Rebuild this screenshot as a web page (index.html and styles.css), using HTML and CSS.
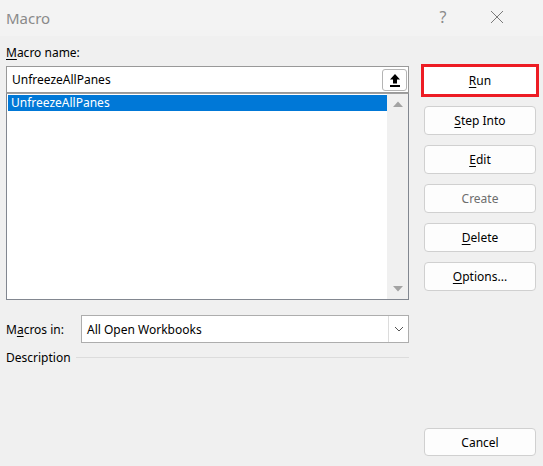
FILE: index.html
```html
<!DOCTYPE html>
<html lang="en">
<head>
<meta charset="utf-8">
<title>Macro</title>
<link rel="stylesheet" href="styles.css">
</head>
<body>
<div class="dialog">
  <div class="titlebar">
    <span class="title">Macro</span>
    <span class="help">?</span>
    <span class="close">
      <svg width="14" height="14" viewBox="0 0 14 14"><path d="M1 1 L13 13 M13 1 L1 13" stroke="#7a7a7a" stroke-width="1" fill="none"/></svg>
    </span>
  </div>
  <div class="body">
    <div class="left">
      <div class="label"><u>M</u>acro name:</div>
      <div class="name-input">
        <span class="name-text">UnfreezeAllPanes</span>
        <span class="pick-btn">
          <svg width="12" height="14" viewBox="0 0 12 14"><path d="M6 1 L11 6.5 L8 6.5 L8 10.5 L4 10.5 L4 6.5 L1 6.5 Z" fill="#000"/><rect x="1" y="12" width="10" height="2" fill="#000"/></svg>
        </span>
      </div>
      <div class="list">
        <div class="items">
          <div class="item selected">UnfreezeAllPanes</div>
        </div>
        <div class="scrollbar">
          <svg width="12" height="8" viewBox="0 0 12 8"><path d="M1 7 L6 1.5 L11 7 Z" fill="#a3a3a3"/></svg>
          <svg width="12" height="8" viewBox="0 0 12 8"><path d="M1 1 L6 6.5 L11 1 Z" fill="#a3a3a3"/></svg>
        </div>
      </div>
      <div class="macros-in">
        <span class="label-inline">M<u>a</u>cros in:</span>
        <div class="combo">
          <span class="combo-text">All Open Workbooks</span>
          <span class="combo-btn">
            <svg width="10" height="6" viewBox="0 0 10 6"><path d="M1 1 L5 5 L9 1" stroke="#555" stroke-width="1" fill="none"/></svg>
          </span>
        </div>
      </div>
      <div class="description">
        <span>Description</span>
        <span class="rule"></span>
      </div>
    </div>
    <div class="right">
      <button class="btn run"><u>R</u>un</button>
      <button class="btn"><u>S</u>tep Into</button>
      <button class="btn"><u>E</u>dit</button>
      <button class="btn disabled">Create</button>
      <button class="btn"><u>D</u>elete</button>
      <button class="btn"><u>O</u>ptions...</button>
      <button class="btn cancel">Cancel</button>
    </div>
  </div>
</div>
</body>
</html>
```
FILE: styles.css
```css
* { box-sizing: border-box; }

html, body {
  margin: 0;
  padding: 0;
  background: #f0f0f0;
}

body {
  font-family: "Noto Sans", "Segoe UI", sans-serif;
  font-size: 12px;
  color: #000;
}

u { text-decoration-thickness: 1px; text-underline-offset: 2px; }

.dialog {
  width: 543px;
  height: 466px;
  display: flex;
  flex-direction: column;
}

/* title bar */
.titlebar {
  height: 36px;
  background: #f3f3f3;
  display: flex;
  align-items: center;
  padding-left: 6px;
}
.title {
  font-size: 15px;
  color: #8a8a8a;
  flex: 1;
  margin-top: -1px;
}
.help {
  font-size: 16px;
  color: #8a8a8a;
  width: 20px;
  text-align: center;
  margin-right: 37px;
  margin-top: -2px;
}
.close {
  width: 14px;
  height: 14px;
  margin-right: 39px;
  display: flex;
  margin-top: -2px;
}

/* content */
.body {
  flex: 1;
  display: flex;
  padding-left: 6px;
  gap: 12px;
}

.left {
  width: 403px;
  display: flex;
  flex-direction: column;
}

.label {
  margin-top: 9px;
  line-height: 16px;
  height: 16px;
  margin-bottom: 5px;
}

.name-input {
  height: 27px;
  background: #fff;
  border: 1px solid #999;
  display: flex;
  align-items: center;
  padding-left: 5px;
  padding-right: 1px;
}
.name-text { flex: 1; }
.pick-btn {
  width: 25px;
  height: 22px;
  border: 1px solid #b4b4b4;
  border-radius: 3px;
  background: #fff;
  display: flex;
  align-items: center;
  justify-content: center;
}

.list {
  height: 207px;
  border: 1px solid #828790;
  border-top-color: #a0a0a0;
  background: #fff;
  display: flex;
}
.items {
  flex: 1;
  padding: 1px 0 0 1px;
}
.item {
  height: 16px;
  line-height: 16px;
  padding-left: 3px;
}
.item.selected {
  background: #0078d7;
  color: #fff;
}
.scrollbar {
  width: 21px;
  background: #f0f0f0;
  display: flex;
  flex-direction: column;
  align-items: center;
  justify-content: space-between;
  padding: 6px 0 6px;
}

.macros-in {
  margin-top: 15px;
  display: flex;
  align-items: center;
  height: 28px;
}
.label-inline { width: 75px; }
.combo {
  flex: 1;
  height: 28px;
  background: #fff;
  border: 1px solid #adadad;
  display: flex;
  align-items: center;
  padding-left: 5px;
}
.combo-text { flex: 1; }
.combo-btn {
  width: 20px;
  height: 100%;
  border-left: 1px solid #dcdcdc;
  display: flex;
  align-items: center;
  justify-content: center;
}

.description {
  margin-top: 6px;
  display: flex;
  align-items: center;
  gap: 5px;
  height: 16px;
}
.rule {
  flex: 1;
  height: 1px;
  background: #dcdcdc;
}

/* command buttons */
.right {
  width: 118px;
  display: flex;
  flex-direction: column;
  align-items: center;
  padding-top: 28px;
  padding-bottom: 10px;
  gap: 10px;
}
.btn {
  font-family: inherit;
  font-size: 12px;
  color: #000;
  width: 112px;
  height: 29px;
  background: #fdfdfd;
  border: 1px solid #d0d0d0;
  border-radius: 4px;
  padding: 0;
}
.btn.run {
  width: 118px;
  height: 33px;
  background: #fff;
  border: 3px solid #ed1c24;
  border-radius: 0;
  margin-bottom: -1px;
}
.btn.disabled { color: #6d6d6d; }
.btn.cancel { margin-top: auto; height: 28px; }
```
